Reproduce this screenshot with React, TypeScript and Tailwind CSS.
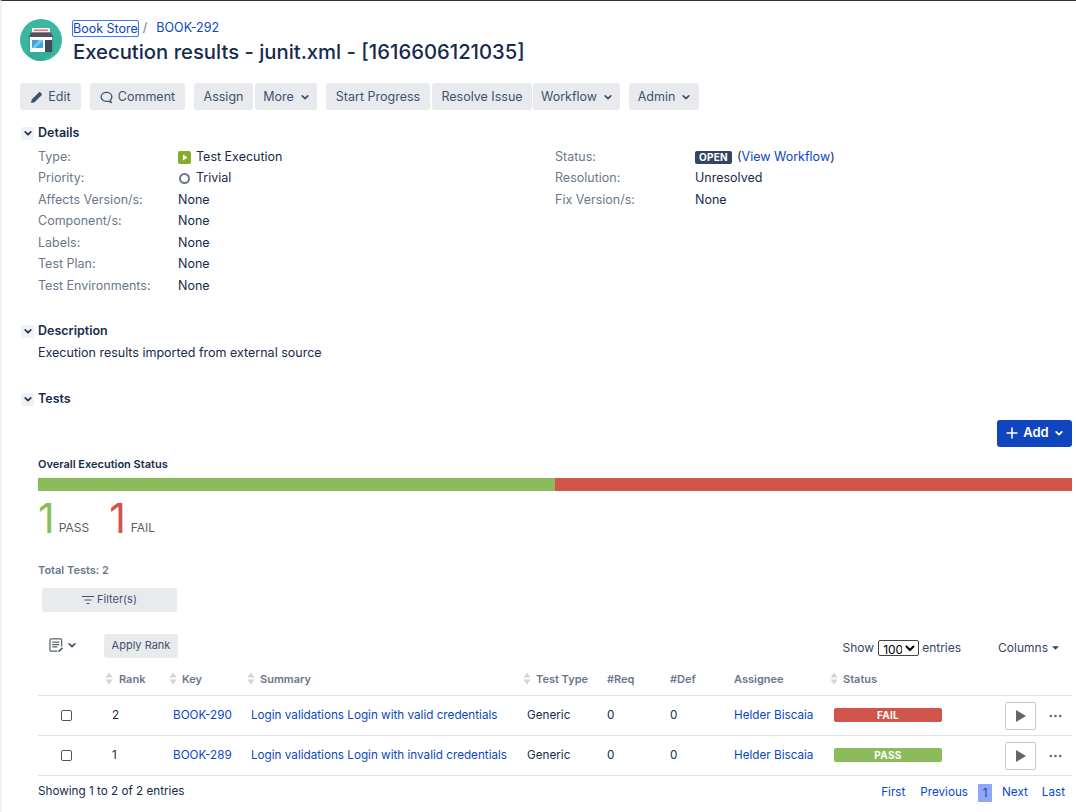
import React from "react";

const Chevron = ({ className = "" }: { className?: string }) => (
  <svg viewBox="0 0 10 6" className={`w-[8px] h-[5px] ${className}`} fill="none" stroke="currentColor" strokeWidth="2.1" strokeLinecap="round" strokeLinejoin="round">
    <path d="M1.5 1 L5 4.5 L8.5 1" />
  </svg>
);

const Btn = ({ children, w, ml = "" }: { children: React.ReactNode; w: string; ml?: string }) => (
  <div className={`h-[27px] pt-[1px] ${w} ${ml} bg-[#e9eaee] rounded-[3px] flex items-center justify-center gap-[5px] text-[12.5px] text-[#42526e]`}>{children}</div>
);

const Section = ({ title }: { title: string }) => (
  <div className="flex items-center h-[16px]">
    <div className="w-[13px] h-[13px] ml-[19px] bg-[#f0f1f4] rounded-[2px] flex items-center justify-center text-[#253858]">
      <Chevron />
    </div>
    <div className="ml-[4px] text-[12.5px] font-semibold text-[#172b4d]">{title}</div>
  </div>
);

const Row = ({ label, children, w = "w-[140px]" }: { label: string; children: React.ReactNode; w?: string }) => (
  <div className="flex items-center h-[21.5px]">
    <div className={`${w} text-[#6b778c]`}>{label}</div>
    <div className="flex items-center text-[#172b4d]">{children}</div>
  </div>
);

const Sort = ({ className = "mr-[5px]" }: { className?: string }) => (
  <svg viewBox="0 0 8 13" className={`w-[8px] h-[13px] shrink-0 ${className}`}>
    <path d="M4 0.5 L7.5 5.5 L0.5 5.5 Z M4 12.5 L7.5 7.5 L0.5 7.5 Z" fill="#d3d4d8" />
  </svg>
);

const Th = ({ w, sort, rank, children }: { w: string; sort?: boolean; rank?: boolean; children?: React.ReactNode }) => (
  <th className={`${w} p-0 font-semibold text-left text-[11px] text-[#6b778c]`}>
    <div className={`flex items-center ${rank ? "pl-[1px]" : sort ? "pl-[4px]" : "pl-[8px]"}`}>
      {sort && <Sort className={rank ? "mr-[6px]" : "mr-[5px]"} />}
      {children}
    </div>
  </th>
);

const rows = [
  { rank: "2", key: "BOOK-290", sum: "Login validations Login with valid credentials", st: "FAIL", bg: "bg-[#d0554b]" },
  { rank: "1", key: "BOOK-289", sum: "Login validations Login with invalid credentials", st: "PASS", bg: "bg-[#8bbb5b]" },
];

const Logo = () => (
  <svg viewBox="0 0 42 42" className="w-[42px] h-[42px] shrink-0">
    <circle cx="21" cy="21" r="21" fill="#3bb6a1" />
    <path d="M8 16 H34 V34 L21 42 C15 42 11 40 8 36 Z" fill="#2fa795" opacity="0.6" />
    <rect x="12" y="9" width="18" height="4.5" fill="#f3efe9" />
    <rect x="14" y="10.5" width="14" height="1.5" fill="#e4727a" />
    <path d="M9 18 L11 13.5 H31 L33 18 Z" fill="#5a4d5c" />
    <rect x="10" y="18" width="22" height="15" fill="#ffffff" />
    <rect x="12" y="21" width="11" height="8" fill="#38a7dd" />
    <path d="M12 29 L19 21 H23 V22 L15 29 Z" fill="#7cc8ec" />
    <rect x="25" y="21" width="7" height="12" fill="#3f4a5a" />
  </svg>
);

export default function App() {
  return (
    <div className="w-[1076px] h-[812px] overflow-hidden bg-white border-t border-t-[#333333] border-l-2 border-l-[#f1f1f8] font-[family-name:Inter,sans-serif] text-[12.5px] text-[#172b4d] relative">
      {/* header */}
      <div className="flex pl-[18px] pt-[18px]">
        <Logo />
        <div className="ml-[11px]">
          <div className="flex items-center h-[18px] text-[12.5px] text-[#0b47c4]">
            <span className="border border-[#3b7bf0] rounded-[2px] leading-[15px] h-[17px] -ml-[1px]">Book Store</span>
            <span className="text-[#6b778c] ml-[4px]">/</span>
            <span className="ml-[9px]">BOOK-292</span>
          </div>
          <div className="text-[20.25px] leading-[28px] font-medium text-[#172b4d] mt-[1px]">Execution results - junit.xml - [1616606121035]</div>
        </div>
      </div>

      {/* toolbar */}
      <div className="flex pl-[18px] mt-[17px]">
        <Btn w="w-[61px]">
          <svg viewBox="0 0 14 14" className="w-[13px] h-[13px]" fill="#42526e"><path d="M1 13 L2 9 L9.5 1.5 C10 1 10.8 1 11.3 1.5 L12.5 2.7 C13 3.2 13 4 12.5 4.5 L5 12 Z" /></svg>
          Edit
        </Btn>
        <Btn w="w-[95px]" ml="ml-[9px]">
          <svg viewBox="0 0 14 14" className="w-[13px] h-[13px]" fill="none" stroke="#42526e" strokeWidth="1.4"><path d="M7 1.5 C10.3 1.5 12.8 3.6 12.8 6.3 C12.8 7.6 12.2 8.8 11.2 9.6 L12 12.2 L8.9 11 C8.3 11.1 7.7 11.2 7 11.2 C3.7 11.2 1.2 9 1.2 6.3 C1.2 3.6 3.7 1.5 7 1.5 Z" /></svg>
          Comment
        </Btn>
        <Btn w="w-[59px]" ml="ml-[9px]">Assign</Btn>
        <Btn w="w-[62px]" ml="ml-[2px]">More <Chevron className="ml-[2px]" /></Btn>
        <Btn w="w-[104px]" ml="ml-[9px]">Start Progress</Btn>
        <Btn w="w-[100px]" ml="ml-[2px]">Resolve Issue</Btn>
        <Btn w="w-[87px]" ml="ml-[1px]">Workflow <Chevron className="ml-[2px]" /></Btn>
        <Btn w="w-[70px]" ml="ml-[9px]">Admin <Chevron className="ml-[2px]" /></Btn>
      </div>

      {/* details */}
      <div className="mt-[15px]"><Section title="Details" /></div>
      <div className="flex pl-[36px] mt-[5.5px]">
        <div className="w-[517px]">
          <Row label="Type:">
            <svg viewBox="0 0 13 13" className="w-[13px] h-[13px] mr-[5px]"><rect width="13" height="13" rx="2" fill="#84ab2c" /><path d="M5 3.5 L9.5 6.5 L5 9.5 Z" fill="#ffffff" /></svg>
            Test Execution
          </Row>
          <Row label="Priority:">
            <span className="w-[11px] h-[11px] rounded-full border-2 border-[#6b778c] ml-[1px] mr-[6px]" />
            Trivial
          </Row>
          <Row label="Affects Version/s:">None</Row>
          <Row label="Component/s:">None</Row>
          <Row label="Labels:">None</Row>
          <Row label="Test Plan:">None</Row>
          <Row label="Test Environments:">None</Row>
        </div>
        <div>
          <Row label="Status:">
            <span className="h-[13px] w-[37px] bg-[#344563] rounded-[2px] text-white text-[10px] leading-[13px] font-bold text-center tracking-[0.3px]">OPEN</span>
            <span className="ml-[5px]">(<span className="text-[#0b47c4]">View Workflow</span>)</span>
          </Row>
          <Row label="Resolution:">Unresolved</Row>
          <Row label="Fix Version/s:">None</Row>
        </div>
      </div>

      {/* description */}
      <div className="mt-[26.5px]"><Section title="Description" /></div>
      <div className="pl-[36px] mt-[5px] leading-[16px]">Execution results imported from external source</div>

      {/* tests */}
      <div className="mt-[31px]"><Section title="Tests" /></div>

      <div className="flex justify-end pr-[4px] mt-[12px]">
        <div className="w-[75px] h-[27px] bg-[#0f46bd] rounded-[3px] text-white font-semibold flex items-center justify-center gap-[5px] text-[13px]">
          <svg viewBox="0 0 12 12" className="w-[12px] h-[12px]" stroke="#fff" strokeWidth="1.6"><path d="M6 0.5 V11.5 M0.5 6 H11.5" /></svg>
          Add
          <Chevron className="ml-[1px]" />
        </div>
      </div>

      <div className="pl-[36px] pr-[4px]">
        <div className="mt-[10px] text-[11px] leading-[14px] font-semibold">Overall Execution Status</div>
        <div className="mt-[7px] flex h-[13px]">
          <div className="flex-1 bg-[#8bbb5b]" />
          <div className="flex-1 bg-[#d0554b]" />
        </div>
        <div className="flex items-end h-[42px] mt-[6px] text-[#5e5e5e] text-[12px]">
          <span className="text-[#8bbb5b] text-[41px] leading-[41px]">1</span>
          <span className="ml-[4px] leading-[15px] mb-[4px]">PASS</span>
          <span className="ml-[20px] text-[#d0554b] text-[41px] leading-[41px]">1</span>
          <span className="ml-[5px] leading-[15px] mb-[4px]">FAIL</span>
        </div>
        <div className="mt-[24px] text-[11px] leading-[14px] font-semibold text-[#6b778c]">Total Tests: 2</div>
        <div className="ml-[4px] mt-[11px] w-[135px] h-[24px] bg-[#e9eaee] rounded-[3px] flex items-center justify-center gap-[3px] text-[11px] text-[#42526e]">
          <svg viewBox="0 0 12 10" className="w-[12px] h-[10px]" stroke="#42526e" strokeWidth="1.2"><path d="M0 1.5 H12 M2.5 5 H9.5 M4.5 8.5 H7.5" /></svg>
          Filter(s)
        </div>

        <div className="flex items-center h-[24px] mt-[22px]">
          <div className="ml-[11px] flex items-center text-[#42526e]">
            <svg viewBox="0 0 16 16" className="w-[15px] h-[15px]" fill="none" stroke="#5a6472" strokeWidth="1.3"><path d="M13.5 9 V2 C13.5 1.5 13.2 1 12.5 1 H2 C1.5 1 1 1.5 1 2 V13 C1 13.6 1.5 14 2 14 H9" /><path d="M3.5 4.5 H11 M3.5 7 H11 M3.5 9.5 H9" /><path d="M10 14.5 L14.5 10.5" strokeWidth="2" /></svg>
            <Chevron className="ml-[4px]" />
          </div>
          <div className="ml-[28px] w-[74px] h-[24px] bg-[#e9eaee] rounded-[3px] flex items-center justify-center text-[11px] text-[#42526e]">Apply Rank</div>
          <div className="ml-auto flex items-center text-[12px] text-[#344563] mt-[4px]">
            Show
            <select defaultValue="100" className="ml-[4px] mr-[3px] w-[41px] h-[16px] border border-[#444] rounded-[2px] text-[12px] text-black bg-white leading-[14px]">
              <option value="100">100</option>
            </select>
            entries
            <span className="ml-[37px] flex items-center text-[12px]">Columns
              <svg viewBox="0 0 8 4" className="w-[7px] h-[4px] ml-[4px] mr-[13px]"><path d="M0 0 H8 L4 4 Z" fill="#344563" /></svg>
            </span>
          </div>
        </div>

        <table className="mt-[5px] w-[1034px] table-fixed border-collapse">
          <thead>
            <tr className="h-[33px] border-b border-[#dfe1e6]">
              <Th w="w-[66px]" />
              <Th w="w-[61px]" sort rank>Rank</Th>
              <Th w="w-[78px]" sort>Key</Th>
              <Th w="w-[276px]" sort>Summary</Th>
              <Th w="w-[80px]" sort>Test Type</Th>
              <Th w="w-[63px]">#Req</Th>
              <Th w="w-[64px]">#Def</Th>
              <Th w="w-[100px]">Assignee</Th>
              <Th w="w-[246px]" sort>Status</Th>
            </tr>
          </thead>
          <tbody className="text-[11.7px]">
            {rows.map((r) => (
              <tr key={r.key} className="h-[40px] border-b border-[#dfe1e6]">
                <td className="p-0">
                  <div className="ml-[23px] w-[11px] h-[11px] rounded-[2px] border border-[#555] bg-white" />
                </td>
                <td className="p-0 pl-[8px]">{r.rank}</td>
                <td className="p-0 pl-[8px] text-[#0b47c4]">{r.key}</td>
                <td className="p-0 pl-[8px] text-[#0b47c4] whitespace-nowrap">{r.sum}</td>
                <td className="p-0 pl-[8px]">Generic</td>
                <td className="p-0 pl-[8px]">0</td>
                <td className="p-0 pl-[8px]">0</td>
                <td className="p-0 pl-[8px] text-[#0b47c4] whitespace-nowrap">Helder Biscaia</td>
                <td className="p-0 pl-[8px]">
                  <div className="flex items-center">
                    <div className={`w-[108px] h-[14px] mb-[2px] ${r.bg} rounded-[2px] text-white text-[10px] leading-[14px] font-bold text-center tracking-[0.3px]`}>{r.st}</div>
                    <div className="ml-[63px] w-[31px] h-[28px] border border-[#c9c9c9] rounded-[2px] flex items-center justify-center">
                      <svg viewBox="0 0 10 12" className="w-[10px] h-[12px]"><path d="M0 0 L10 6 L0 12 Z" fill="#666666" /></svg>
                    </div>
                    <svg viewBox="0 0 14 4" className="w-[13px] h-[4px] ml-[13px]"><circle cx="2" cy="2" r="1.4" fill="#5e6c84" /><circle cx="7" cy="2" r="1.4" fill="#5e6c84" /><circle cx="12" cy="2" r="1.4" fill="#5e6c84" /></svg>
                  </div>
                </td>
              </tr>
            ))}
          </tbody>
        </table>

        <div className="flex items-center justify-between h-[32px] text-[11.7px]">
          <span>Showing 1 to 2 of 2 entries</span>
          <div className="flex items-center text-[#0b47c4] text-[11.7px] mr-[7px] mt-[2px]">
            <span>First</span>
            <span className="ml-[15px]">Previous</span>
            <span className="ml-[10px] w-[14px] h-[18px] bg-[#8fa8f5] text-center leading-[18px]">1</span>
            <span className="ml-[10px]">Next</span>
            <span className="ml-[14px]">Last</span>
          </div>
        </div>
      </div>
    </div>
  );
}
